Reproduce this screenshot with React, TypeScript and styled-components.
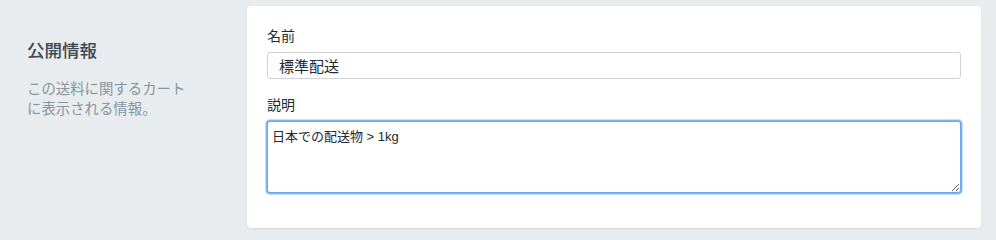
import React, { useEffect, useRef } from "react";
import styled, { createGlobalStyle } from "styled-components";

const GlobalStyle = createGlobalStyle`
  html, body {
    margin: 0;
    padding: 0;
    background: #e9ecef;
  }
  body {
    font-family: "Liberation Sans", "Noto Sans CJK JP", sans-serif;
    color: #22292f;
  }
  * { box-sizing: border-box; }
`;

const Page = styled.div`
  display: flex;
  align-items: flex-start;
  padding: 6px 15px 10px 27px;
`;

const Aside = styled.div`
  flex: none;
  width: 166px;
  margin-right: 54px;
  padding-top: 33px;
`;

const Heading = styled.h2`
  margin: 0 0 16px;
  font-size: 17.5px;
  line-height: 24px;
  font-weight: 500;
  color: #3d4852;
`;

const Description = styled.p`
  margin: 0;
  font-size: 14.4px;
  line-height: 20px;
  color: #8795a1;
`;

const Card = styled.div`
  flex: 1;
  display: flex;
  flex-direction: column;
  gap: 16px;
  background: #ffffff;
  border-radius: 4px;
  box-shadow: 0 1px 2px rgba(0, 0, 0, 0.08);
  padding: 20px 20px 35px;
`;

const Field = styled.div`
  display: flex;
  flex-direction: column;
`;

const Label = styled.label`
  display: block;
  margin-bottom: 6px;
  font-size: 14px;
  line-height: 20px;
  color: #22292f;
`;

const TextInput = styled.input`
  display: block;
  width: 100%;
  height: 27px;
  padding: 0 11px;
  border: 1px solid #cfd3d7;
  border-radius: 3px;
  background: #fff;
  font-family: "Liberation Sans", "Noto Sans CJK JP", sans-serif;
  font-size: 15px;
  color: #22292f;
  outline: none;
`;

const TextArea = styled.textarea`
  display: block;
  width: 100%;
  height: 72px;
  padding: 6px 4px;
  border: 1px solid #6ea6f0;
  border-radius: 3px;
  background: #fff;
  font-family: "Liberation Sans", "Noto Sans CJK JP", sans-serif;
  font-size: 13px;
  line-height: 18px;
  color: #22292f;
  caret-color: #111;
  outline: none;
  resize: vertical;
  box-shadow: 0 0 0 1px #7db1f3, 0 0 1px 2px rgba(125, 177, 243, 0.45);
`;

export default function App() {
  const ref = useRef<HTMLTextAreaElement>(null);
  const desc = "日本での配送物 > 1kg";

  useEffect(() => {
    const el = ref.current;
    if (el) {
      el.focus();
      el.setSelectionRange(desc.length, desc.length);
    }
  }, []);

  return (
    <>
      <GlobalStyle />
      <Page>
        <Aside>
          <Heading>公開情報</Heading>
          <Description>この送料に関するカートに表示される情報。</Description>
        </Aside>
        <Card>
          <Field>
            <Label htmlFor="name">名前</Label>
            <TextInput id="name" defaultValue="標準配送" />
          </Field>
          <Field>
            <Label htmlFor="desc">説明</Label>
            <TextArea id="desc" ref={ref} defaultValue={desc} />
          </Field>
        </Card>
      </Page>
    </>
  );
}
